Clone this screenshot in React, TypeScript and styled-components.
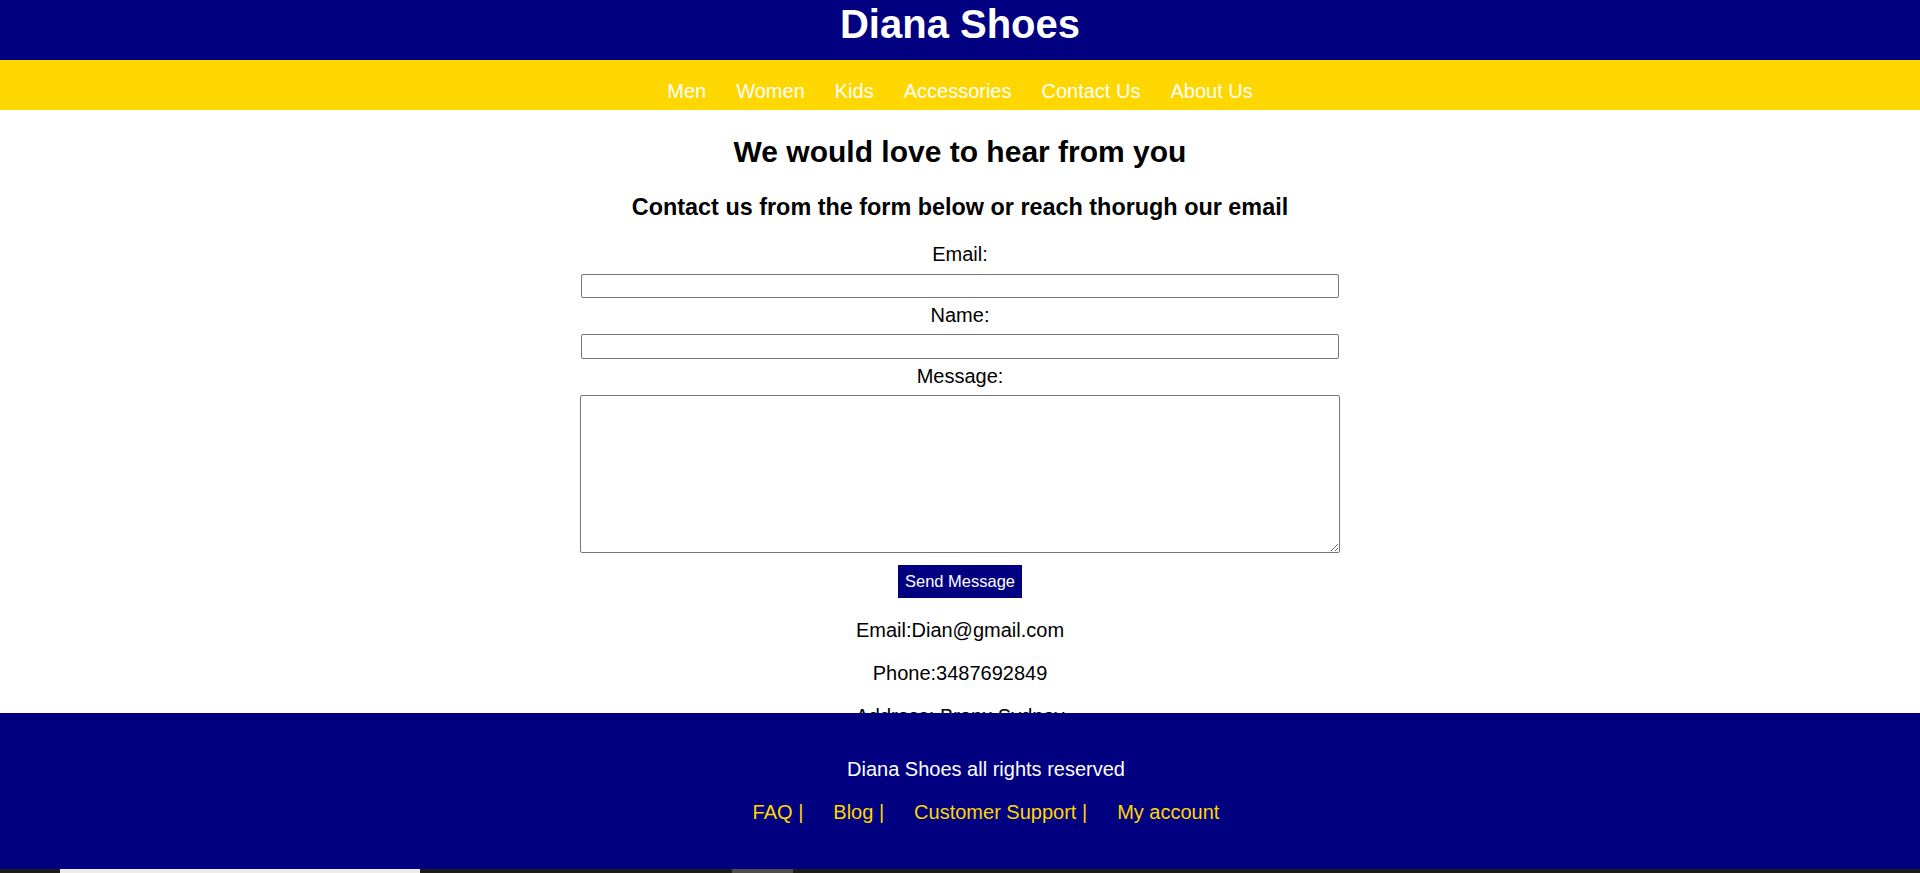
import React from "react";
import styled, { createGlobalStyle } from "styled-components";

const GlobalStyle = createGlobalStyle`
  html, body {
    margin: 0;
    padding: 0;
  }
  body {
    font-family: "Liberation Sans", Arial, Helvetica, sans-serif;
    font-size: 20px;
    color: #000;
    background: #fff;
  }
`;

const Header = styled.header`
  background: #000080;
  height: 60px;
  box-sizing: border-box;
  padding-top: 2px;
  text-align: center;
`;

const Title = styled.h1`
  margin: 0;
  font-size: 40px;
  font-weight: 700;
  color: #fff;
  line-height: normal;
`;

const Nav = styled.nav`
  background: #ffd700;
  padding: 20px 0 7px;
  display: flex;
  justify-content: center;
  gap: 30px;
`;

const NavLink = styled.a`
  color: #fff;
  text-decoration: none;
  font-size: 20px;
  line-height: 23px;
`;

const Main = styled.main`
  display: flex;
  flex-direction: column;
  align-items: center;
  text-align: center;
  padding-bottom: 200px;
`;

const Heading = styled.h2`
  font-size: 30px;
  font-weight: 700;
  margin: 25px 0 0;
  line-height: normal;
`;

const SubHeading = styled.h3`
  font-size: 23.4px;
  font-weight: 700;
  margin: 25px 0 0;
  line-height: normal;
`;

const Form = styled.form`
  display: flex;
  flex-direction: column;
  align-items: center;
  margin-top: 22px;
`;

const Label = styled.label<{ $top: number }>`
  display: block;
  font-size: 20px;
  line-height: 23px;
  margin-top: ${(p) => p.$top}px;
`;

const TextInput = styled.input<{ $top: number; $h: number }>`
  box-sizing: border-box;
  width: 758px;
  height: ${(p) => p.$h}px;
  margin: ${(p) => p.$top}px 0 0;
  border: 1px solid #767676;
  border-radius: 2px;
  padding: 1px 2px;
  font-family: inherit;
  font-size: 13px;
  background: #fff;
`;

const MessageArea = styled.textarea`
  box-sizing: border-box;
  width: 760px;
  height: 158px;
  margin: 7px 0 0;
  border: 1px solid #767676;
  border-radius: 2px;
  padding: 2px;
  font-family: inherit;
  font-size: 13px;
  background: #fff;
  resize: both;
`;

const SendButton = styled.button`
  box-sizing: border-box;
  margin-top: 12px;
  height: 33px;
  padding: 0 7px;
  background: #000080;
  color: #fff;
  border: none;
  font-family: "Liberation Sans", Arial, sans-serif;
  font-size: 16.5px;
  cursor: pointer;
`;

const Info = styled.p<{ $top: number }>`
  margin: ${(p) => p.$top}px 0 0;
  font-size: 20px;
  line-height: 23px;
`;

const Footer = styled.footer`
  position: fixed;
  left: 0;
  right: 0;
  bottom: 0;
  height: 160px;
  box-sizing: border-box;
  padding: 25px 0 0 52px;
  background: #000080;
  text-align: center;
`;

const FooterText = styled.p`
  margin: 20px 0 0;
  color: #fff;
  font-size: 20px;
  line-height: 23px;
`;

const FooterLinks = styled.div`
  margin-top: 20px;
  display: flex;
  justify-content: center;
  gap: 30px;
`;

const FooterLink = styled.a`
  color: #ffd700;
  text-decoration: none;
  font-size: 20px;
  line-height: 23px;
  white-space: pre;
`;

const BottomStrip = styled.div`
  position: fixed;
  left: 0;
  right: 0;
  bottom: 0;
  height: 4px;
  background: #1c1c1c;
  z-index: 10;
`;

const StripPiece = styled.div<{ $left: number; $width: number; $color: string }>`
  position: absolute;
  top: 0;
  bottom: 0;
  left: ${(p) => p.$left}px;
  width: ${(p) => p.$width}px;
  background: ${(p) => p.$color};
`;

const navItems = ["Men", "Women", "Kids", "Accessories", "Contact Us", "About Us"];
const footerItems = ["FAQ |", "Blog |", "Customer Support |", "My account"];

export default function App() {
  return (
    <>
      <GlobalStyle />
      <Header>
        <Title>Diana Shoes</Title>
      </Header>
      <Nav>
        {navItems.map((item) => (
          <NavLink key={item} href="#">
            {item}
          </NavLink>
        ))}
      </Nav>
      <Main>
        <Heading>We would love to hear from you</Heading>
        <SubHeading>Contact us from the form below or reach thorugh our email</SubHeading>
        <Form onSubmit={(e) => e.preventDefault()}>
          <Label $top={0} htmlFor="email">Email:</Label>
          <TextInput id="email" type="email" $top={8} $h={24} />
          <Label $top={6} htmlFor="name">Name:</Label>
          <TextInput id="name" type="text" $top={7} $h={25} />
          <Label $top={6} htmlFor="message">Message:</Label>
          <MessageArea id="message" />
          <SendButton type="submit">Send Message</SendButton>
        </Form>
        <Info $top={21}>Email:Dian@gmail.com</Info>
        <Info $top={20}>Phone:3487692849</Info>
        <Info $top={20}>Address: Bronx Sydney</Info>
      </Main>
      <Footer>
        <FooterText>Diana Shoes all rights reserved</FooterText>
        <FooterLinks>
          {footerItems.map((item) => (
            <FooterLink key={item} href="#">
              {item}
            </FooterLink>
          ))}
        </FooterLinks>
      </Footer>
      <BottomStrip>
        <StripPiece $left={60} $width={360} $color="#ececec" />
        <StripPiece $left={732} $width={61} $color="#4d4d4d" />
      </BottomStrip>
    </>
  );
}
